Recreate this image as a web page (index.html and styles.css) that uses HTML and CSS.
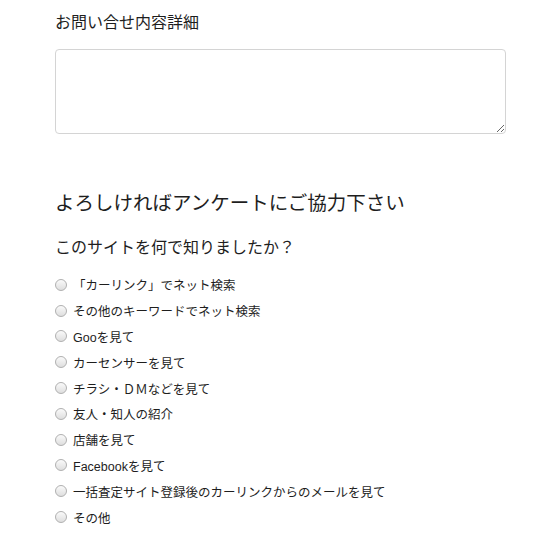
FILE: index.html
```html
<!DOCTYPE html>
<html lang="ja">
<head>
<meta charset="utf-8">
<link rel="stylesheet" href="styles.css">
</head>
<body>
<div class="form">
  <div class="field">
    <label class="label">お問い合せ内容詳細</label>
    <textarea class="textarea"></textarea>
  </div>
  <h2 class="section-title">よろしければアンケートにご協力下さい</h2>
  <h3 class="question">このサイトを何で知りましたか？</h3>
  <ul class="options">
    <li><label class="option"><input type="radio" name="q"><span>「カーリンク」でネット検索</span></label></li>
    <li><label class="option"><input type="radio" name="q"><span>その他のキーワードでネット検索</span></label></li>
    <li><label class="option"><input type="radio" name="q"><span>Gooを見て</span></label></li>
    <li><label class="option"><input type="radio" name="q"><span>カーセンサーを見て</span></label></li>
    <li><label class="option"><input type="radio" name="q"><span>チラシ・ＤＭなどを見て</span></label></li>
    <li><label class="option"><input type="radio" name="q"><span>友人・知人の紹介</span></label></li>
    <li><label class="option"><input type="radio" name="q"><span>店舗を見て</span></label></li>
    <li><label class="option"><input type="radio" name="q"><span>Facebookを見て</span></label></li>
    <li><label class="option"><input type="radio" name="q"><span>一括査定サイト登録後のカーリンクからのメールを見て</span></label></li>
    <li><label class="option"><input type="radio" name="q"><span>その他</span></label></li>
  </ul>
</div>
</body>
</html>
```
FILE: styles.css
```css
html, body {
  margin: 0;
  padding: 0;
  background: #fff;
}
body {
  font-family: "Liberation Sans", "Noto Sans CJK JP", sans-serif;
  color: #1e1e1e;
}
.form {
  padding: 12px 44px 0 55px;
}
.field {
  display: flex;
  flex-direction: column;
}
.label {
  font-size: 16px;
  line-height: 22px;
  margin-bottom: 15px;
}
.textarea {
  width: 451px;
  height: 85px;
  box-sizing: border-box;
  border: 1px solid #d4d4d4;
  border-radius: 4px;
  margin: 0;
  padding: 4px;
  resize: vertical;
  font: inherit;
}
.section-title {
  font-size: 19.5px;
  font-weight: normal;
  line-height: 28px;
  margin: 55px 0 0;
}
.question {
  font-size: 16px;
  font-weight: normal;
  line-height: 22px;
  margin: 20px 0 13px;
}
.options {
  list-style: none;
  margin: 0;
  padding: 0;
}
.options li {
  height: 25.8px;
  display: flex;
  align-items: center;
}
.option {
  display: flex;
  align-items: center;
  gap: 6px;
  font-size: 12.5px;
}
.option input {
  appearance: none;
  -webkit-appearance: none;
  width: 12px;
  height: 12px;
  margin: 0;
  border: 1px solid #b0b0b0;
  border-radius: 50%;
  background: linear-gradient(#fafafa, #dedede);
  box-sizing: border-box;
}
```
